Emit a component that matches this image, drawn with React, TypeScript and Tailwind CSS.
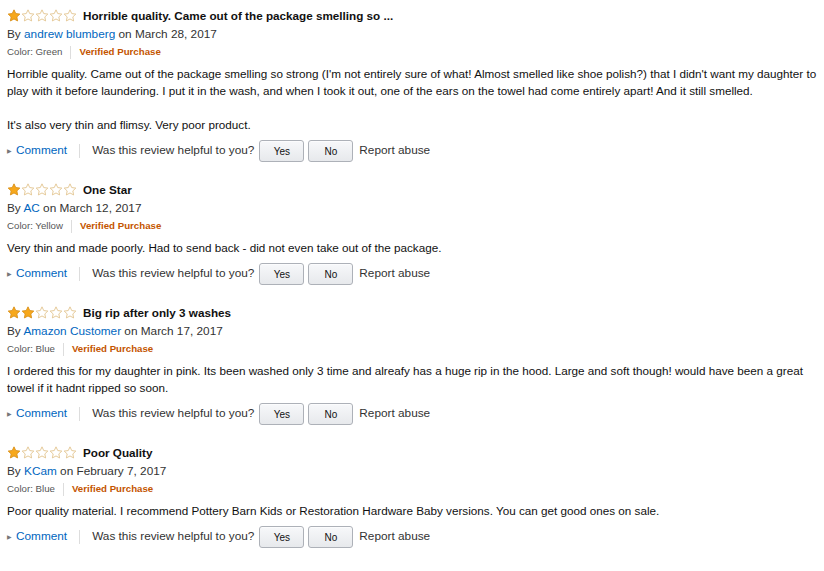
const reviews = [
  {
    stars: 1,
    title: 'Horrible quality. Came out of the package smelling so ...',
    author: 'andrew blumberg',
    date: 'March 28, 2017',
    color: 'Green',
    body: [
      "Horrible quality. Came out of the package smelling so strong (I'm not entirely sure of what! Almost smelled like shoe polish?) that I didn't want my daughter to play with it before laundering. I put it in the wash, and when I took it out, one of the ears on the towel had come entirely apart! And it still smelled.",
      "It's also very thin and flimsy. Very poor product.",
    ],
  },
  {
    stars: 1,
    title: 'One Star',
    author: 'AC',
    date: 'March 12, 2017',
    color: 'Yellow',
    body: ['Very thin and made poorly. Had to send back - did not even take out of the package.'],
  },
  {
    stars: 2,
    title: 'Big rip after only 3 washes',
    author: 'Amazon Customer',
    date: 'March 17, 2017',
    color: 'Blue',
    body: [
      'I ordered this for my daughter in pink. Its been washed only 3 time and alreafy has a huge rip in the hood. Large and soft though! would have been a great towel if it hadnt ripped so soon.',
    ],
  },
  {
    stars: 1,
    title: 'Poor Quality',
    author: 'KCam',
    date: 'February 7, 2017',
    color: 'Blue',
    body: [
      'Poor quality material. I recommend Pottery Barn Kids or Restoration Hardware Baby versions. You can get good ones on sale.',
    ],
  },
];

const Star = ({ filled }: { filled: boolean }) => (
  <svg width="14" height="13" viewBox="0 0 24 23" className="block">
    <path
      d="M12 1.5l3.1 6.6 7.2.9-5.3 5 1.4 7.1L12 17.6l-6.4 3.5 1.4-7.1-5.3-5 7.2-.9z"
      fill={filled ? '#f7a81b' : '#fff'}
      stroke={filled ? '#d9901a' : '#e2c48f'}
      strokeWidth="1.6"
      strokeLinejoin="round"
    />
  </svg>
);

const Button = ({ label }: { label: string }) => (
  <button className="h-[22px] w-[45px] rounded-[3px] border border-[#adb1b8] bg-gradient-to-b from-[#f7f8fa] to-[#e7e9ec] text-[10px] text-[#111] shadow-[0_1px_0_rgba(255,255,255,0.6)_inset]">
    {label}
  </button>
);

const Review = ({ r }: { r: (typeof reviews)[number] }) => (
  <div className="mb-[19px]">
    <div className="flex items-center h-[17px]">
      <div className="flex mr-[6px]">
        {[0, 1, 2, 3, 4].map((i) => (
          <Star key={i} filled={i < r.stars} />
        ))}
      </div>
      <span className="text-[11.7px] font-bold text-[#111]">{r.title}</span>
    </div>
    <div className="mt-[1px] text-[11.8px] leading-[18px] text-[#333]">
      By <a className="text-[#0066c0]">{r.author}</a> on {r.date}
    </div>
    <div className="flex items-center text-[9.7px] leading-[18px]">
      <span className="text-[#555]">Color: {r.color}</span>
      <span className="mx-[8px] h-[13px] w-px bg-[#ddd]" />
      <span className="font-bold text-[#c45500]">Verified Purchase</span>
    </div>
    <div className="mt-[4px] text-[11.7px] leading-[17px] text-[#111]">
      {r.body.map((p, i) => (
        <p key={i} className={i > 0 ? 'mt-[17px]' : ''}>
          {p}
        </p>
      ))}
    </div>
    <div className="mt-[7px] flex items-center text-[11.8px] text-[#333]">
      <span className="mr-[4px] text-[6px] text-[#777]">▶</span>
      <a className="text-[#0066c0]">Comment</a>
      <span className="mx-[12px] h-[14px] w-px bg-[#ddd]" />
      <span>Was this review helpful to you?</span>
      <div className="ml-[5px] flex gap-[4px]">
        <Button label="Yes" />
        <Button label="No" />
      </div>
      <span className="ml-[6px]">Report abuse</span>
    </div>
  </div>
);

export default function App() {
  return (
    <div className="min-h-screen bg-white pl-[7px] pt-[7px] font-['Liberation_Sans',Arial,sans-serif]">
      <div className="w-[812px]">
        {reviews.map((r, i) => (
          <Review key={i} r={r} />
        ))}
      </div>
    </div>
  );
}
